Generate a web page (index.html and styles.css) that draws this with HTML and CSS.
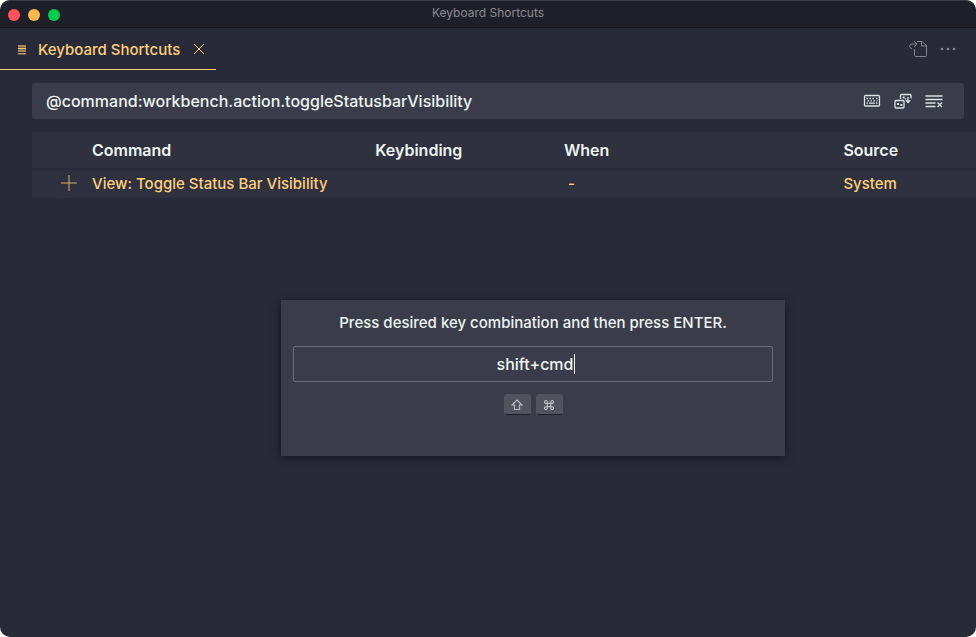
FILE: index.html
```html
<!DOCTYPE html>
<html lang="en">
<head>
<meta charset="utf-8">
<title>Keyboard Shortcuts</title>
<link rel="stylesheet" href="styles.css">
</head>
<body>
<div class="window">
  <header class="titlebar">
    <div class="lights">
      <button class="light close" aria-label="Close window"></button>
      <button class="light minimize" aria-label="Minimize window"></button>
      <button class="light maximize" aria-label="Zoom window"></button>
    </div>
    <div class="title">Keyboard Shortcuts</div>
  </header>

  <nav class="tabs">
    <div class="tab">
      <svg class="tab-icon" viewBox="0 0 8 10" aria-hidden="true"><path class="faint" d="M0 .5h8M0 3h8M0 8.500h8"/><path d="M0 3.500h8M0 6h8"/><path class="faint" d="M0 1.500h8M0 5h8M0 9h8"/></svg>
      <a class="tab-label" href="#shortcuts">Keyboard Shortcuts</a>
      <button class="icon-button" aria-label="Close tab">
        <svg class="tab-close" viewBox="0 0 12 12"><path d="M1 1l10 10M11 1L1 11"/></svg>
      </button>
    </div>
    <div class="editor-actions">
      <button class="icon-button" aria-label="Open Keyboard Shortcuts (JSON)">
        <svg class="action-icon" viewBox="0 0 20 18"><path d="M9 1.500h5l4.500 4v9.800q0 1.200-1.200 1.200H7.700q-1.200 0-1.200-1.200V9M13.500 1.500V6h5M4 8.500C.8 8.500.8 4 4 4h4.500M6 1l3 3-3 3"/></svg>
      </button>
      <button class="icon-button" aria-label="More actions">
        <svg class="more-icon" viewBox="0 0 18 4"><circle cx="3" cy="2" r="1.300"/><circle cx="9" cy="2" r="1.300"/><circle cx="15" cy="2" r="1.300"/></svg>
      </button>
    </div>
  </nav>

  <main class="editor" id="shortcuts">
    <div class="search">
      <input class="search-input" type="text" aria-label="Search keybindings" value="@command:workbench.action.toggleStatusbarVisibility">
      <div class="search-actions">
        <button class="icon-button" aria-label="Record keys">
          <svg class="search-icon" viewBox="0 0 18 16"><rect x="1.500" y="2.500" width="15" height="10.500" rx="1"/><path d="M3.500 5.500h1.500M6.500 5.500H8M9.500 5.500H11M13 5.500h1.500M4.500 7.800H6M7.500 7.800H9M10.500 7.800H12M13.500 7.800h1M3.500 10.200H5M6 10.200h6M13 10.200h1.500"/></svg>
        </button>
        <button class="icon-button" aria-label="Sort by precedence">
          <svg class="search-icon" viewBox="0 0 18 16"><path d="M6.500 6V2.500q0-1 1-1H16q1 0 1 1v3M11 6h1M2 7.500h7q1 0 1 1V14q0 1-1 1H2q-1 0-1-1V8.500q0-1 1-1zM14 4v5.500M11.800 7.300L14 9.500l2.200-2.200"/><path class="solid" d="M3 10h2v2H3zM6.300 11h2v2h-2zM8.700 3.500h2v2h-2z"/></svg>
        </button>
        <button class="icon-button" aria-label="Clear keybindings search input">
          <svg class="search-icon" viewBox="0 0 18 16"><path d="M.5 3H17.500M.5 6.500H17.500M.5 10H10.500M.5 13.500H10.500M12.500 9.500l4.500 4.500M17 9.500L12.500 14"/></svg>
        </button>
      </div>
    </div>

    <table class="bindings">
      <colgroup><col class="col-action"><col class="col-command"><col class="col-key"><col class="col-when"><col></colgroup>
      <thead>
        <tr><td></td><th scope="col">Command</th><th scope="col">Keybinding</th><th scope="col">When</th><th scope="col">Source</th></tr>
      </thead>
      <tbody>
        <tr>
          <td class="add-cell"><button class="icon-button" aria-label="Add keybinding"><svg class="add-icon" viewBox="0 0 16 16"><path d="M8 0v16M0 8h16"/></svg></button></td>
          <td>View: Toggle Status Bar Visibility</td><td></td><td class="when-empty">-</td><td>System</td>
        </tr>
      </tbody>
    </table>
  </main>

  <section class="dialog" role="dialog" aria-labelledby="prompt">
    <label class="prompt" id="prompt" for="combo">Press desired key combination and then press ENTER.</label>
    <div class="combo">
      <input class="combo-input" id="combo" type="text" value="shift+cmd">
      <span class="caret"></span>
    </div>
    <div class="keys">
      <kbd class="key"><svg class="key-icon" viewBox="0 0 12 12" role="img" aria-label="Shift"><path d="M6 1l5 5H8.500v4.500h-5V6H1z"/></svg></kbd>
      <kbd class="key"><svg class="key-icon" viewBox="0 0 12 12" role="img" aria-label="Command"><path d="M4.300 4.300H3A1.400 1.400 0 1 1 4.300 3V9A1.400 1.400 0 1 1 3 7.700H9A1.400 1.400 0 1 1 7.700 9V3A1.400 1.400 0 1 1 9 4.300z"/></svg></kbd>
    </div>
  </section>
</div>
</body>
</html>
```
FILE: styles.css
```css
* { box-sizing: border-box; }

body {
  margin: 0;
  background: #fff;
  color: #edf4f3;
  font: 500 15px/24px Inter, "Liberation Sans", sans-serif;
}

button, input { font: inherit; color: inherit; }

svg { display: block; fill: none; stroke: currentColor; }

.window {
  position: relative;
  min-height: 100vh;
  overflow: hidden;
  border-radius: 10px;
  background: #282a38;
}

.titlebar {
  display: grid;
  grid-template-columns: 1fr auto 1fr;
  align-items: center;
  height: 28px;
  padding: 0 8px;
  border-top: 1px solid #3b3d47;
  border-bottom: 1px solid #171820;
  border-radius: 10px 10px 0 0;
  background: #1e1f28;
}

.title { padding-bottom: 2px; color: #8b8c92; font-size: 12px; font-weight: 400; line-height: 16px; }

.lights { display: flex; gap: 8px; padding-top: 2px; }

.light { width: 12px; height: 12px; padding: 0; border: 0; border-radius: 50%; }
.close { background: #ff5459; }
.minimize { background: #ffb84c; }
.maximize { background: #00ca4f; }

.tabs { display: flex; justify-content: space-between; height: 42px; }

.tab {
  display: flex;
  align-items: center;
  padding: 2px 11px 0 18px;
  border-bottom: 1px solid #ffd17d;
  color: #ffcf7d;
}

.tab-icon { width: 8px; height: 10px; margin-right: 12px; }
.faint { opacity: .6; }
.tab-label { margin-right: 13px; color: inherit; text-decoration: none; }

.icon-button { display: block; padding: 0; border: 0; background: none; }

.tab-close { width: 12px; height: 12px; margin-bottom: 2px; }

.editor-actions { display: flex; align-items: center; gap: 11px; padding: 0 19px 1px 0; color: #85868e; }
.action-icon { width: 20px; height: 18px; }
.more-icon { width: 18px; height: 4px; fill: currentColor; stroke: none; }

.editor { padding: 13px 0 0 32px; }

.search {
  display: flex;
  align-items: center;
  height: 36px;
  margin-right: 12px;
  padding: 0 21px 0 14px;
  border-radius: 2px;
  background: #3a3d49;
}

.search-input { flex: 1; min-width: 0; padding: 0; border: 0; outline: 0; background: none; font-size: 16px; }
.search-actions { display: flex; gap: 13px; color: #dce2e3; }
.search-icon { width: 18px; height: 16px; stroke-width: 1.3; }
.solid { fill: currentColor; stroke: none; }

.bindings {
  width: 100%;
  margin-top: 13px;
  border-collapse: collapse;
  table-layout: fixed;
}

.bindings tr { background: #2f313f; }
.bindings thead tr { height: 37px; border-bottom: 2px solid #282a38; }
.bindings tbody tr { height: 29px; color: #ffcf7d; }
.bindings th, .bindings td { padding: 0 0 0 10px; text-align: left; white-space: nowrap; }
.bindings th { font-size: 16px; font-weight: 600; }
.bindings .add-cell { padding: 0 0 2px 29px; }
.bindings .when-empty { padding-left: 14px; }

.col-action { width: 50px; }
.col-command { width: 30%; }
.col-key { width: 20%; }
.col-when { width: 29.6%; }

.add-icon { width: 16px; height: 16px; opacity: .8; }

.dialog {
  position: absolute;
  top: 300px;
  left: calc(50% - 207px);
  width: 504px;
  min-height: 156px;
  padding: 11px 12px;
  background: #3a3d49;
  box-shadow: 0 2px 8px #14151f;
  text-align: center;
}

.prompt { display: block; }
.combo { position: relative; margin-top: 11px; }

.combo-input {
  display: block;
  width: 100%;
  height: 36px;
  padding: 0 0 0 4px;
  border: 1px solid #6c6f79;
  border-radius: 2px;
  outline: 0;
  background: none;
  font-size: 16px;
  text-align: center;
}

.caret { position: absolute; top: 8px; left: calc(50% + 41px); width: 1px; height: 20px; background: #edf4f3; }

.keys { display: flex; justify-content: center; gap: 5px; margin-top: 12px; }

.key {
  display: flex;
  align-items: center;
  justify-content: center;
  width: 27px;
  height: 21px;
  padding-top: 1px;
  border: 1px solid #51545f;
  border-bottom-color: #20212c;
  border-radius: 3px;
  background: #51545f;
  color: #b9bcc3;
}

.key-icon { width: 12px; height: 12px; stroke-width: 1.2; }
```
